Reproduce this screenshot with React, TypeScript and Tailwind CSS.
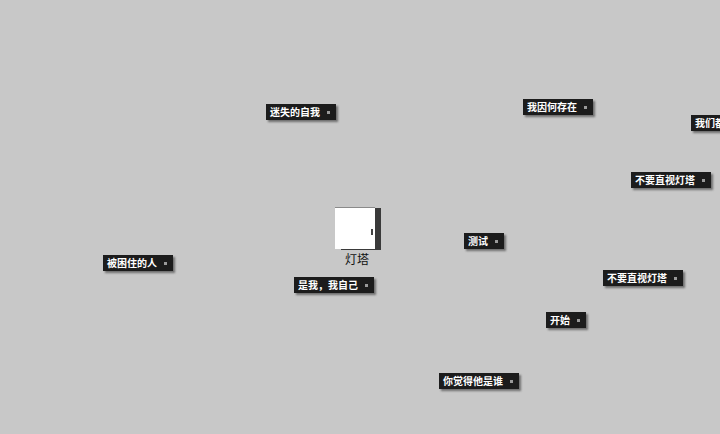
import React from 'react';

type Node = { label: string; x: number; y: number };

const nodes: Node[] = [
  { label: '迷失的自我', x: 266, y: 104 },
  { label: '我因何存在', x: 523, y: 99 },
  { label: '我们都在这里', x: 691, y: 115 },
  { label: '不要直视灯塔', x: 631, y: 172 },
  { label: '被困住的人', x: 103, y: 255 },
  { label: '是我，我自己', x: 294, y: 277 },
  { label: '测试', x: 464, y: 233 },
  { label: '不要直视灯塔', x: 603, y: 270 },
  { label: '开始', x: 546, y: 312 },
  { label: '你觉得他是谁', x: 439, y: 373 },
];

const Tag = ({ label, x, y }: Node) => (
  <div
    className="absolute flex h-[16px] items-center whitespace-nowrap bg-[#1c1c1c] pl-[4px] pr-[6px] shadow-[2px_2px_2px_rgba(0,0,0,0.45)]"
    style={{ left: x, top: y }}
  >
    <span className="text-[10px] font-bold leading-none text-white">{label}</span>
    <span className="ml-[7px] h-[3px] w-[3px] bg-[#9a9a9a]" />
  </div>
);

export default function App() {
  return (
    <div
      className="relative h-[434px] w-[720px] overflow-hidden bg-[#c8c8c8]"
      style={{ fontFamily: '"Noto Sans CJK SC", "Noto Sans", sans-serif' }}
    >
      {/* lighthouse node */}
      <div className="absolute left-[335px] top-[207px] flex flex-col items-center">
        <div className="relative h-[42px] w-[40px] border-t border-[#8a8a8a] bg-white shadow-[6px_1px_0_#3a3a3a]">
          <span className="absolute right-[2px] top-[21px] h-[6px] w-[2px] bg-[#444]" />
        </div>
      </div>
      <div className="absolute left-[345px] top-[253px] text-[12px] leading-none text-[#111]">灯塔</div>

      {nodes.map((n, i) => (
        <Tag key={i} {...n} />
      ))}
    </div>
  );
}
